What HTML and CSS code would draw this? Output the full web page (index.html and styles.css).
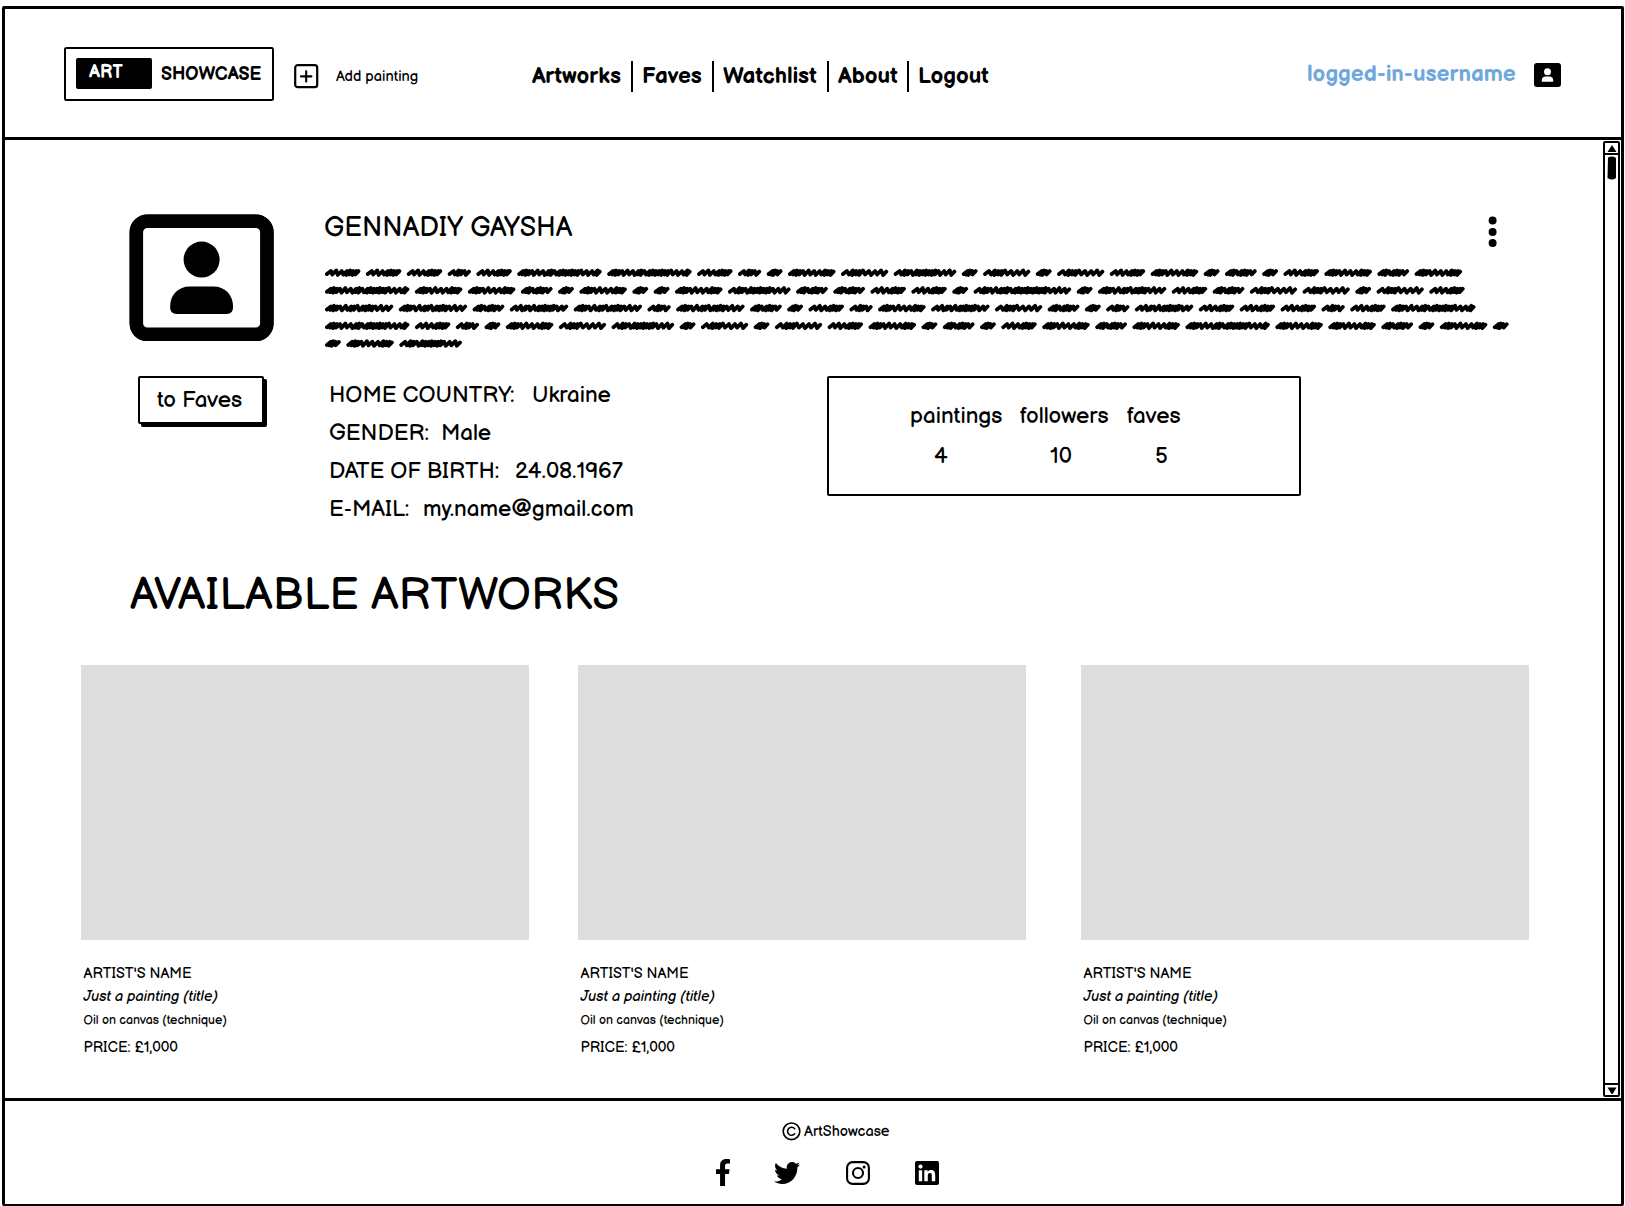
FILE: index.html
```html
<!DOCTYPE html>
<html lang="en">
<head>
<meta charset="utf-8">
<title>Art Showcase</title>
<link rel="stylesheet" href="styles.css">
</head>
<body>
<div class="page">
  <header class="header">
    <div class="logo"><span class="logo-art">ART</span><span class="logo-show">SHOWCASE</span></div>
    <svg class="add-icon" width="25" height="25" viewBox="0 0 25 25"><rect x="1.2" y="1.2" width="22" height="22" rx="2.5" fill="none" stroke="#000" stroke-width="2.2"/><path d="M12.2 7.2v10.4M7 12.4h10.4" stroke="#000" stroke-width="2.1" stroke-linecap="round"/></svg>
    <div class="add-cell"><span class="add-text">Add painting</span></div>
    <nav class="nav"><a class="n1">Artworks</a><a class="n2">Faves</a><a class="n3">Watchlist</a><a class="n4">About</a><a class="n5">Logout</a></nav>
    <div class="user-cell"><span class="user">logged-in-username</span></div>
    <svg class="user-icon" width="27" height="24" viewBox="0 0 27 24"><rect width="27" height="24" rx="3"/><circle cx="13.5" cy="8.8" r="3.5" fill="#fff"/><path d="M7.8 18.8v-1.2a4 4 0 0 1 4-4h3.4a4 4 0 0 1 4 4v1.2z" fill="#fff"/></svg>
  </header>

  <main class="main">
    <div class="content">
      <section class="profile">
        <div class="side">
          <svg class="avatar" width="145" height="127" viewBox="-.6 -.4 145 127"><rect x="6.75" y="6.75" width="130.5" height="113.2" rx="11" fill="none" stroke="#000" stroke-width="13.5"/><rect x="3" y="3" width="138" height="121" rx="15" fill="none" stroke="#000" stroke-width="6"/><circle cx="72" cy="45.2" r="18"/><path d="M47 99.5q-6.500 0-6.500-7C40.500 80 49 72.200 60 72.200h24c11 0 19.500 8 19.500 20.300q0 7-6.500 7z"/></svg>
          <button class="to-faves"><span>to Faves</span></button>
        </div>
        <div class="details">
          <div class="name-row">
            <h1 class="name">GENNADIY GAYSHA</h1>
            <svg class="dots" width="10" height="32" viewBox="0 0 10 32"><circle cx="4.600" cy="4.600" r="4"/><circle cx="4.600" cy="15.900" r="4"/><circle cx="4.600" cy="27.100" r="4"/></svg>
          </div>
          <svg class="bio" id="bio" width="1190" height="90" viewBox="0 0 1190 90"></svg>
          <div class="facts">
            <div class="info">
              <div class="row r1"><span>HOME COUNTRY:</span><b>Ukraine</b></div>
              <div class="row r2"><span>GENDER:</span><b>Male</b></div>
              <div class="row r3"><span>DATE OF BIRTH:</span><b>24.08.1967</b></div>
              <div class="row r4"><span>E-MAIL:</span><b>my.name@gmail.com</b></div>
            </div>
            <div class="stats">
              <div class="stat s1"><span>paintings</span><span class="num">4</span></div>
              <div class="stat s2"><span>followers</span><span class="num">10</span></div>
              <div class="stat s3"><span>faves</span><span class="num">5</span></div>
            </div>
          </div>
        </div>
      </section>
      <h2 class="title">AVAILABLE ARTWORKS</h2>
      <section class="cards">
        <article class="card"><div class="pic"></div><p class="artist">ARTIST'S NAME</p><p class="work">Just a painting (title)</p><p class="tech">Oil on canvas (technique)</p><p class="price">PRICE: £1,000</p></article>
        <article class="card"><div class="pic"></div><p class="artist">ARTIST'S NAME</p><p class="work">Just a painting (title)</p><p class="tech">Oil on canvas (technique)</p><p class="price">PRICE: £1,000</p></article>
        <article class="card"><div class="pic"></div><p class="artist">ARTIST'S NAME</p><p class="work">Just a painting (title)</p><p class="tech">Oil on canvas (technique)</p><p class="price">PRICE: £1,000</p></article>
      </section>
    </div>
    <div class="scroll">
      <div class="arrow up"><svg width="10" height="7" viewBox="0 0 10 7"><path d="M5 0l4.500 7h-9z"/></svg></div>
      <svg class="thumb" width="10" height="24" viewBox="0 0 10 24"><path d="M1 1.500Q5-.5 9 2v20q-4 3-8.500 0z"/></svg>
      <div class="arrow down"><svg width="10" height="7" viewBox="0 0 10 7"><path d="M.5.5h9L5.700 7H4.500z"/></svg></div>
    </div>
  </main>

  <footer class="footer">
    <div class="copy"><svg width="19" height="19" viewBox="0 0 19 19"><circle cx="9.500" cy="9.300" r="8.300" fill="none" stroke="#000" stroke-width="1.600"/><path d="M12.700 6.800a4 4 0 1 0 0 5" fill="none" stroke="#000" stroke-width="1.600" stroke-linecap="round"/></svg><span>ArtShowcase</span></div>
    <div class="social">
      <svg width="14" height="27" viewBox="0 0 264 512" preserveAspectRatio="none"><path d="M76.700 512V283H0v-91h76.700v-71.700C76.700 42.400 124.300 0 193.800 0c33.300 0 61.900 2.500 70.200 3.600V85h-48.200c-37.800 0-45.100 18-45.100 44.300V192H256l-11.700 91h-73.600v229"/></svg>
      <svg class="bird" width="26" height="22" viewBox="0 48 512 416" preserveAspectRatio="none"><path d="M459.370 151.716c.325 4.548.325 9.097.325 13.645 0 138.720-105.583 298.558-298.558 298.558-59.452 0-114.680-17.219-161.137-47.106 8.447.974 16.568 1.299 25.340 1.299 49.055 0 94.213-16.568 130.274-44.832-46.132-.975-84.792-31.188-98.112-72.772 6.498.974 12.995 1.624 19.818 1.624 9.421 0 18.843-1.300 27.614-3.573-48.081-9.747-84.143-51.980-84.143-102.985v-1.299c13.969 7.797 30.214 12.670 47.431 13.319-28.264-18.843-46.781-51.005-46.781-87.391 0-19.492 5.197-37.360 14.294-52.954 51.655 63.675 129.300 105.258 216.365 109.807-1.624-7.797-2.599-15.918-2.599-24.040 0-57.828 46.782-104.934 104.934-104.934 30.213 0 57.502 12.670 76.670 33.137 23.715-4.548 46.456-13.320 66.599-25.340-7.798 24.366-24.366 44.833-46.132 57.827 21.117-2.273 41.584-8.122 60.426-16.243-14.292 20.791-32.161 39.308-52.628 54.253z"/></svg>
      <svg width="24" height="24" viewBox="0 0 24 24"><rect x="1.100" y="1.100" width="21.800" height="21.800" rx="5.500" fill="none" stroke="#000" stroke-width="2.100"/><circle cx="12" cy="12" r="5" fill="none" stroke="#000" stroke-width="2.100"/><circle cx="18.100" cy="5.900" r="1.500"/></svg>
      <svg width="24" height="24" viewBox="0 0 24 24"><rect width="24" height="24" rx="2"/><circle cx="5.500" cy="5.600" r="2.100" fill="#fff"/><path d="M3.800 9.300h3.400v11H3.800zM9.300 9.300h3.300v1.500c.7-1.200 2-1.800 3.400-1.800 3.500 0 4.200 2.300 4.200 5.300v6h-3.400v-5.400c0-1.300 0-2.900-1.800-2.900s-2.200 1.400-2.200 2.800v5.500H9.300z" fill="#fff"/></svg>
    </div>
  </footer>
</div>
<script src="scribble.js"></script>
</body>
</html>
```
FILE: styles.css
```css
* { box-sizing: border-box; margin: 0; padding: 0; }
body { background: #fff; color: #000; font-family: "Balsamiq Sans", Lato, "Open Sans", sans-serif; font-size: 22.4px; white-space: nowrap; overflow: hidden; }
svg { display: block; }
.page { width: 1622px; height: 1200px; margin: 6px 1px 0 2px; border: 3px solid #000; border-bottom-width: 2px; border-radius: 2px; display: flex; flex-direction: column; }

.header { height: 131px; border-bottom: 3px solid #000; padding-left: 59px; display: grid; grid-template-columns: 230px 42px 186px 786px 226px 27px; align-items: start; }
.logo { width: 210px; height: 54px; margin-top: 38px; border: 2.500px solid #000; border-radius: 3px 2px 4px 2px / 2px 4px 2px 3px; display: flex; font-weight: 700; font-size: 18.1px; }
.logo-art { width: 76px; height: 31px; margin: 9px 0 0 10px; padding-left: 13px; background: #000; color: #fff; line-height: 30px; border-radius: 2px; }
.logo-show { margin-left: 9px; line-height: 51px; }
.add-icon { margin-top: 55px; }
.add-text { display: block; margin-top: 56px; font-size: 14.6px; line-height: 24px; }
.nav { margin-top: 52px; display: flex; font-weight: 700; line-height: 31px; }
.nav a { height: 31px; padding-left: 9px; border-right: 2px solid #000; }
.nav .n1 { width: 111px; padding-left: 10px; }
.n2 { width: 81px; }
.n3 { width: 115px; }
.n4 { width: 80px; }
.nav .n5 { border: 0; }
.user { display: block; margin-top: 51px; margin-left: -1px; line-height: 30px; font-weight: 700; color: #6fa8dc; }
.user-icon { margin-top: 54px; }

.main { height: 958px; display: flex; justify-content: space-between; padding-right: 1px; }
.profile { display: flex; padding: 69px 0 0 124px; }
.side { width: 196px; padding-top: 5px; }
.to-faves { display: block; width: 126px; height: 48px; margin: 35px 0 0 9px; background: #fff; border: 2px solid #000; border-radius: 2px; box-shadow: 3px 3px 0 #000; font: inherit; color: inherit; line-height: 44px; text-align: left; padding: 1px 0 0 17px; }
.name-row { display: flex; justify-content: space-between; width: 1173px; }
.name { font-size: 27px; font-weight: 400; line-height: 32px; margin-left: -1px; padding-top: 3px; }
.dots { margin-top: 7px; }
.bio { margin-top: 16px; }
.facts { display: flex; padding: 20px 0 0 4px; }
.info { width: 498px; padding-top: 3px; }
.row { height: 38px; line-height: 38px; display: flex; }
.row b { font-weight: 400; }
.r1 span { width: 203px; }
.r2 span { width: 112px; }
.r3 span { width: 186px; }
.r4 span { width: 94px; }
.stats { width: 474px; height: 120px; margin-top: 2px; border: 2.500px solid #000; border-radius: 2px; display: flex; padding: 19px 0 0 81px; }
.stat { display: flex; flex-direction: column; line-height: 40px; }
.s1 { width: 110px; }
.s2 { width: 107px; }
.s1 .num { padding-left: 24px; }
.s2 .num { padding-left: 30px; }
.s3 .num { padding-left: 28px; }
.title { font-size: 45px; font-weight: 400; line-height: 52px; margin: 41px 0 43px 125px; }
.cards { display: grid; grid-template-columns: 497px 503px 448px; padding-left: 76px; }
.pic { width: 448px; height: 275px; background: #ddd; margin-bottom: 23px; }
.card p { padding-left: 2.500px; line-height: 22px; height: 23px; font-size: 14.6px; }
.card .work { font-style: italic; height: 24px; }
.card .tech { font-size: 12.4px; height: 27px; }

.scroll { width: 17px; height: 956px; margin-top: 1px; border: 2px solid #000; border-radius: 2px; display: flex; flex-direction: column; align-items: center; }
.arrow { width: 13px; height: 12px; display: flex; align-items: center; justify-content: center; }
.up { border-bottom: 2px solid #000; }
.thumb { margin-top: 1px; }
.down { margin-top: auto; border-top: 2px solid #000; }

.footer { flex: 1; border-top: 3px solid #000; }
.copy { display: flex; gap: 3px; padding: 21px 0 0 777px; font-size: 14.6px; line-height: 20px; }
.social { display: flex; align-items: center; gap: 45px; padding: 17px 0 0 711px; }
.bird { margin: 0 1px 0 -1px; }
```
FILE: scribble.js
```js
// Draws the placeholder biography as rows of scribbled words.
// Each word kind has a width and a rhythm: d = tight stroke, o = open stroke.
const kinds = {
  s: [15.8, 'ddo'], t: [23.2, 'oddo'], f: [31.7, 'ddodddo'], w: [35.4, 'ooodddd'],
  m: [47.5, 'dddooooddd'], l: [47.2, 'odddoooo'], G: [58.4, 'oodooddddddoo'],
  L: [62.6, 'oddodddddddooo'], H: [68.3, 'dddooddoddddooo'],
  X: [84.4, 'dddoooddodddddddoood'], Y: [97.6, 'oddoodddodddddddddddoooo']
};
const rows = [
  'wwwtwXXwtsmlLslslwmsfswmfm',
  'XmmfsmssmLffwwsYsHwfllslw',
  'HHfGHtHfswtmGlfstGwwwtwX',
  'XwtsmlLslslwmsfswmfmXmmfsms',
  'smL'
];
const svg = document.getElementById('bio');
rows.forEach((row, r) => {
  let x = 1.9, d = '';
  for (const kind of row) {
    const [width, rhythm] = kinds[kind];
    const steps = [...rhythm].map(c => c === 'd' ? 2.8 : 5);
    const scale = (width - 7) / steps.reduce((a, b) => a + b);
    const y = 8.5 + r * 17.7;
    let cx = x;
    d += `M${cx.toFixed(1)} ${(y + 1.6).toFixed(1)}`;
    steps.forEach((s, i) => {
      const up = i % 3 === 1 ? 2.1 : 1.5;
      const down = i % 2 ? 2.5 : 2;
      d += `L${(cx + 4).toFixed(1)} ${(y - up).toFixed(1)}`;
      cx += s * scale;
      d += `L${cx.toFixed(1)} ${(y + down).toFixed(1)}`;
    });
    d += 'l3.200 -3.400';
    x += width + 5.5;
  }
  const path = document.createElementNS('http://www.w3.org/2000/svg', 'path');
  path.setAttribute('d', d);
  path.setAttribute('fill', 'none');
  path.setAttribute('stroke', '#000');
  path.setAttribute('stroke-width', '3.8');
  path.setAttribute('stroke-linecap', 'round');
  path.setAttribute('stroke-linejoin', 'round');
  svg.appendChild(path);
});
```
